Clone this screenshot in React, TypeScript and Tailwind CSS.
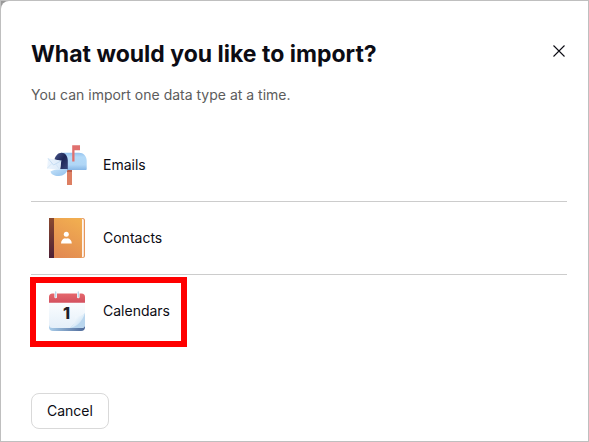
import React from 'react';

const MailboxIcon: React.FC = () => (
  <svg viewBox="0 0 40 40" className="w-10 h-10 shrink-0" aria-hidden="true">
    <defs>
      <linearGradient id="mailBody" x1="0" y1="0" x2="0" y2="1">
        <stop offset="0" stopColor="#94c3ef" />
        <stop offset="0.25" stopColor="#b4daf8" />
        <stop offset="0.7" stopColor="#b0d6f6" />
        <stop offset="1" stopColor="#86b6e6" />
      </linearGradient>
      <linearGradient id="mailInside" x1="0" y1="0" x2="1" y2="1">
        <stop offset="0" stopColor="#4a588c" />
        <stop offset="0.5" stopColor="#1d2556" />
        <stop offset="1" stopColor="#39477c" />
      </linearGradient>
      <linearGradient id="mailLid" x1="0" y1="0" x2="1" y2="1">
        <stop offset="0" stopColor="#c4e2fa" />
        <stop offset="1" stopColor="#90bfeb" />
      </linearGradient>
      <linearGradient id="mailLetter" x1="0" y1="0" x2="1" y2="0">
        <stop offset="0" stopColor="#edf5fd" />
        <stop offset="1" stopColor="#dbeaf9" />
      </linearGradient>
    </defs>
    <rect x="20" y="24" width="5" height="16" fill="#dd7f62" />
    <rect x="20" y="24" width="5" height="3" fill="#b9604f" />
    <path d="M14 7.700h18c4.500 0 7.700 3.500 7.700 8V24c0 .6-.4 1-1 1H20V13z" fill="url(#mailBody)" />
    <path d="M7.500 14.500C8.500 10.500 11 7.700 14.500 7.700c3.800 0 6.300 3.500 6.300 7.800V25H13l1-9z" fill="url(#mailInside)" />
    <path d="M3.500 26.500c3-1.500 6-2.500 9.500-2.500h7.800c-1 4-4.300 6.800-8.800 7-4.500.2-7.800-1.500-8.500-4.500z" fill="url(#mailLid)" />
    <path d="M1 13.300l13.300 2.500-1.300 9.200-13-1.500z" fill="url(#mailLetter)" />
    <path d="M1 13.300l5.500 6.700 7.800-4.200" fill="none" stroke="#bdd7f0" strokeWidth="0.8" />
    <path d="M0 23.500l4.800-5M13 25l-4.200-6" stroke="#c9dff3" strokeWidth="0.6" />
    <path d="M25.200.3H33v4.900h-5.500v11.200h-2.300z" fill="#e0706e" />
  </svg>
);

const ContactsIcon: React.FC = () => (
  <svg viewBox="0 0 40 40" className="w-10 h-10 shrink-0" aria-hidden="true">
    <defs>
      <linearGradient id="bookCover" x1="0.700" y1="0" x2="0.300" y2="1">
        <stop offset="0" stopColor="#f1ad50" />
        <stop offset="1" stopColor="#e28a52" />
      </linearGradient>
      <linearGradient id="bookSpine" x1="0" y1="0" x2="0" y2="1">
        <stop offset="0" stopColor="#8a4a30" />
        <stop offset="1" stopColor="#4d2036" />
      </linearGradient>
    </defs>
    <path d="M7 0h28.500A2.500 2.500 0 0 1 38 2.500v35a2.500 2.500 0 0 1-2.500 2.500H7z" fill="#e6965a" />
    <path d="M33.500.8h1.800a1.500 1.500 0 0 1 1.500 1.500v35.400a1.500 1.500 0 0 1-1.500 1.500h-1.800z" fill="#fff5ee" />
    <path d="M6 0h27.500A1.500 1.500 0 0 1 35 1.500v37a1.500 1.500 0 0 1-1.500 1.500H6z" fill="url(#bookCover)" />
    <path d="M2 0h5v40H2z" fill="url(#bookSpine)" />
    <circle cx="19.300" cy="16.200" r="2.500" fill="#fff" />
    <path d="M14 25.500c0-3 1.800-4.800 4-5.300.8.500 1.900.5 2.700 0 2.200.5 4.100 2.300 4.100 5.300z" fill="#fff" />
  </svg>
);

const CalendarIcon: React.FC = () => (
  <svg viewBox="0 0 40 40" className="w-10 h-10 shrink-0" aria-hidden="true">
    <defs>
      <linearGradient id="calTop" x1="0" y1="0" x2="0" y2="1">
        <stop offset="0" stopColor="#e5686d" />
        <stop offset="1" stopColor="#d3505f" />
      </linearGradient>
      <linearGradient id="calBase" x1="0" y1="0" x2="1" y2="0">
        <stop offset="0" stopColor="#a9cdea" />
        <stop offset="1" stopColor="#4c6898" />
      </linearGradient>
      <linearGradient id="calPage" x1="0" y1="0" x2="0" y2="1">
        <stop offset="0" stopColor="#fbfdff" />
        <stop offset="1" stopColor="#e4eff9" />
      </linearGradient>
      <linearGradient id="calFold" x1="0" y1="0" x2="1" y2="1">
        <stop offset="0.200" stopColor="#ffffff" />
        <stop offset="0.700" stopColor="#cfe4f5" />
      </linearGradient>
    </defs>
    <path d="M2 12h36v24a4 4 0 0 1-4 4H6a4 4 0 0 1-4-4z" fill="url(#calBase)" />
    <path d="M2 11h36v23a3.500 3.500 0 0 1-3.500 3H5.500A3.500 3.500 0 0 1 2 33.500z" fill="url(#calPage)" />
    <path d="M38 22v11.500a3.500 3.500 0 0 1-3.500 3.500H23z" fill="#b9d6ee" />
    <path d="M38 22c-2.500 2.500-5.500 3.500-9.500 3.500.3 4.500-1.500 9-5.500 11.500C30 35.500 35 31 38 22z" fill="url(#calFold)" />
    <path d="M2 11.800V6a3.500 3.500 0 0 1 3.500-3.500h29A3.500 3.500 0 0 1 38 6v5.800z" fill="url(#calTop)" />
    <path d="M8.700 1v5M31.300 1v5" stroke="#fff" strokeWidth="2.600" strokeLinecap="round" />
    <path d="M8.700 1v5M31.300 1v5" stroke="#bcd9ee" strokeWidth="1.400" strokeLinecap="round" />
    <text x="19.500" y="28" textAnchor="middle" fontSize="16" fontWeight="800" fill="#1f2027">1</text>
  </svg>
);

const importTypes = [
  { label: 'Emails', icon: <MailboxIcon />, highlighted: false },
  { label: 'Contacts', icon: <ContactsIcon />, highlighted: false },
  { label: 'Calendars', icon: <CalendarIcon />, highlighted: true },
];

const App: React.FC = () => {
  return (
    <div className="min-h-screen bg-[#9a9a9a] border border-[#bfbfbf] font-['Inter',sans-serif] text-sm text-[#0c0c14]">
      <div
        role="dialog"
        aria-labelledby="import-title"
        className="min-h-[440px] bg-white rounded-tl-lg pt-9 pb-3 pl-[30px] pr-[21px]"
      >
        <div className="flex items-start justify-between">
          <h1 id="import-title" className="text-[23px] leading-[34px] font-bold">
            What would you like to import?
          </h1>
          <button type="button" aria-label="Close" className="mt-1.5 p-0.5">
            <svg viewBox="0 0 12 12" className="w-3 h-3" fill="none" stroke="currentColor" strokeWidth="1.100">
              <path d="M.5.500l11 11M11.500.500l-11 11" />
            </svg>
          </button>
        </div>
        <p className="mt-3.5 leading-5 text-[#5c5c5c]">You can import one data type at a time.</p>

        <ul className="mt-6 divide-y divide-[#cccccc]">
          {importTypes.map(({ label, icon, highlighted }) => (
            <li key={label} className="relative">
              <button type="button" className="flex items-center gap-4 w-full h-[72px] px-4 text-left">
                {icon}
                {label}
              </button>
              {highlighted && (
                <span className="absolute -left-px top-0.5 bottom-0 w-[157px] border-6 border-[#ff0000] pointer-events-none" />
              )}
            </li>
          ))}
        </ul>

        <button type="button" className="mt-[46px] h-9 px-[15px] border border-[#d9d9d9] rounded-lg">
          Cancel
        </button>
      </div>
    </div>
  );
};

export default App;
